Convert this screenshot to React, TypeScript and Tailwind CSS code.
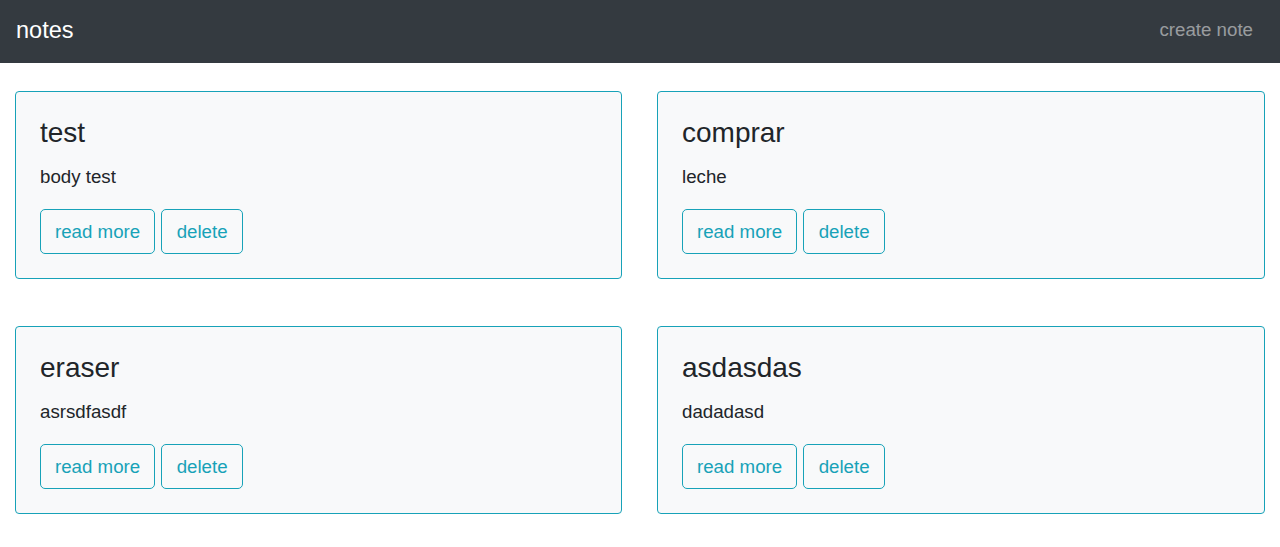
const notes = [
  { title: "test", body: "body test" },
  { title: "comprar", body: "leche" },
  { title: "eraser", body: "asrsdfasdf" },
  { title: "asdasdas", body: "dadadasd" },
];

function NoteCard({ title, body }: { title: string; body: string }) {
  return (
    <div className="rounded border border-[#17a2b8] bg-[#f8f9fa] p-6">
      <h3 className="mb-[13px] text-[28px] leading-[34px] font-normal text-[#212529]">{title}</h3>
      <p className="mb-[19px] text-[18.7px] leading-[27px] text-[#212529]">{body}</p>
      <div className="flex gap-[6px]">
        <button className="h-[45px] rounded-[5px] border border-[#17a2b8] px-[14px] text-[18.7px] leading-[27px] text-[#17a2b8]">
          read more
        </button>
        <button className="h-[45px] rounded-[5px] border border-[#17a2b8] px-[14.5px] text-[18.7px] leading-[27px] text-[#17a2b8]">
          delete
        </button>
      </div>
    </div>
  );
}

export default function App() {
  return (
    <div className="min-h-[547px] bg-white font-['Liberation_Sans',Arial,sans-serif]">
      <nav className="flex h-[63px] items-center justify-between bg-[#343a40] px-4 pb-[2px]">
        <span className="text-[23.5px] text-white">notes</span>
        <a className="pr-[11px] text-[18.7px] text-white/50">create note</a>
      </nav>
      <div className="grid grid-cols-[607px_608px] gap-x-[35px] gap-y-[47px] px-[15px] pt-7">
        {notes.map((n) => (
          <NoteCard key={n.title} title={n.title} body={n.body} />
        ))}
      </div>
    </div>
  );
}
